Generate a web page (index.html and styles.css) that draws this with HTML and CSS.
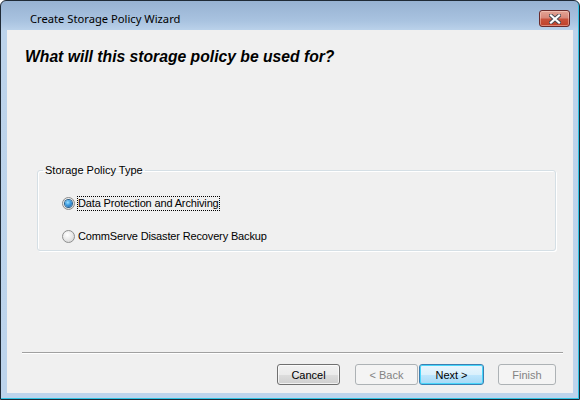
FILE: index.html
```html
<!DOCTYPE html>
<html>
<head>
<meta charset="utf-8">
<link rel="stylesheet" href="styles.css">
</head>
<body>
<div class="window">
  <div class="titlebar">
    <span class="title">Create Storage Policy Wizard</span>
    <button class="close" aria-label="Close">
      <svg width="12" height="10" viewBox="0 0 12 10">
        <path d="M2 1.5 L10 8.5 M10 1.5 L2 8.5" stroke="#4a4a52" stroke-width="4" stroke-linecap="square"/>
        <path d="M2 1.5 L10 8.5 M10 1.5 L2 8.5" stroke="#ffffff" stroke-width="2.2" stroke-linecap="square"/>
      </svg>
    </button>
  </div>
  <div class="client">
    <h1 class="heading">What will this storage policy be used for?</h1>
    <fieldset class="group">
      <legend class="group-label">Storage Policy Type</legend>
      <label class="option">
        <span class="radio checked"><span class="dot"></span></span>
        <span class="option-text focused">Data Protection and Archiving</span>
      </label>
      <label class="option">
        <span class="radio"></span>
        <span class="option-text">CommServe Disaster Recovery Backup</span>
      </label>
    </fieldset>
    <div class="spacer"></div>
    <div class="separator"></div>
    <div class="buttons">
      <button class="btn btn-cancel">Cancel</button>
      <button class="btn btn-back" disabled>&lt; Back</button>
      <button class="btn btn-next default">Next &gt;</button>
      <button class="btn btn-finish" disabled>Finish</button>
    </div>
  </div>
</div>
</body>
</html>
```

FILE: styles.css
```css
html, body {
  margin: 0;
  padding: 0;
  background: #ffffff;
}

.window {
  box-sizing: border-box;
  width: 580px;
  height: 400px;
  border: 1px solid #1f2a36;
  border-radius: 6px 6px 0 0;
  background: linear-gradient(to bottom, #97b2d2 0px, #a9c3e0 20px, #bcd3eb 30px, #bdd4ec 100%);
  box-shadow: inset -1px -1px 0 #2fc3e3;
  display: flex;
  flex-direction: column;
  font-family: "Liberation Sans", Arial, sans-serif;
}

.titlebar {
  height: 29px;
  display: flex;
  align-items: flex-start;
  position: relative;
}

.title {
  font-family: "Noto Sans", "Open Sans", sans-serif;
  font-size: 11.2px;
  line-height: 16px;
  color: #000;
  margin: 10px 0 0 29px;
}

.close {
  position: absolute;
  top: 9px;
  right: 9px;
  width: 31px;
  height: 17px;
  padding: 0;
  border: 1px solid #6a2b2b;
  border-radius: 3px;
  background: linear-gradient(to bottom, #e3a495 0%, #d8887a 45%, #c8523c 55%, #c04029 100%);
  box-shadow: inset 0 0 0 1px rgba(255, 220, 210, 0.45);
  display: flex;
  align-items: center;
  justify-content: center;
}

.client {
  flex: 1;
  margin: 0 6px 6px 6px;
  background: #f0f0f0;
  display: flex;
  flex-direction: column;
}

.heading {
  margin: 17px 0 0 18px;
  font-size: 15.7px;
  line-height: 20px;
  font-weight: bold;
  font-style: italic;
  color: #000;
}

.group {
  margin: 96px 17px 0 30px;
  padding: 16px 0 4px 0;
  border: 1px solid #d5dfe5;
  border-radius: 3px;
  box-shadow: 1px 1px 0 #ffffff, inset 1px 1px 0 #ffffff;
  min-width: 0;
}

.group-label {
  margin-left: 5px;
  padding: 0 2px;
  font-size: 11px;
  line-height: 14px;
  color: #000;
}

.option {
  display: flex;
  align-items: center;
  height: 20px;
  padding-left: 24px;
  font-size: 11px;
  color: #000;
}

.option + .option {
  margin-top: 13px;
}

.radio {
  box-sizing: border-box;
  width: 13px;
  height: 13px;
  border-radius: 50%;
  border: 1px solid #8e8f8f;
  background: radial-gradient(circle at 40% 35%, #ffffff 0%, #e8e8e8 50%, #cfcfcf 100%);
  display: flex;
  align-items: center;
  justify-content: center;
  margin-right: 2px;
}

.radio.checked {
  border-color: #8a8a8a;
}

.dot {
  width: 7px;
  height: 7px;
  border-radius: 50%;
  background: radial-gradient(circle at 40% 35%, #9be0ff 0%, #3b9be0 45%, #0f4f9b 100%);
  box-shadow: 0 0 0 1px #2c628b;
}

.option-text {
  padding: 0;
  line-height: 13px;
  letter-spacing: -0.15px;
  border: 1px dotted transparent;
}

.option-text.focused {
  border-color: #000;
}

.spacer {
  flex: 1;
}

.separator {
  margin: 0 10px 0 15px;
  height: 1px;
  background: #a0a0a0;
  border-bottom: 1px solid #ffffff;
}

.buttons {
  display: flex;
  justify-content: flex-end;
  margin: 10px 17px 8px 0;
  height: 21px;
}

.btn {
  box-sizing: border-box;
  height: 21px;
  padding: 0;
  border: 1px solid #707070;
  border-radius: 3px;
  background: linear-gradient(to bottom, #f2f2f2 0%, #ebebeb 50%, #dddddd 51%, #cfcfcf 100%);
  box-shadow: inset 0 0 0 1px rgba(255, 255, 255, 0.7);
  font-family: "Liberation Sans", Arial, sans-serif;
  font-size: 11px;
  color: #000;
}

.btn:disabled {
  border-color: #adb2b5;
  background: #f4f4f4;
  box-shadow: none;
  color: #838383;
}

.btn.default {
  border-color: #3c7fb1;
  background: linear-gradient(to bottom, #eaf6fd 0%, #d9f0fc 50%, #bee6fd 51%, #a7d9f5 100%);
  box-shadow: inset 0 0 0 1px #48d6fb;
}

.btn-cancel { width: 63px; }
.btn-back { width: 63px; margin-left: 15px; }
.btn-next { width: 65px; margin-left: 1px; }
.btn-finish { width: 58px; margin-left: 14px; }
```
